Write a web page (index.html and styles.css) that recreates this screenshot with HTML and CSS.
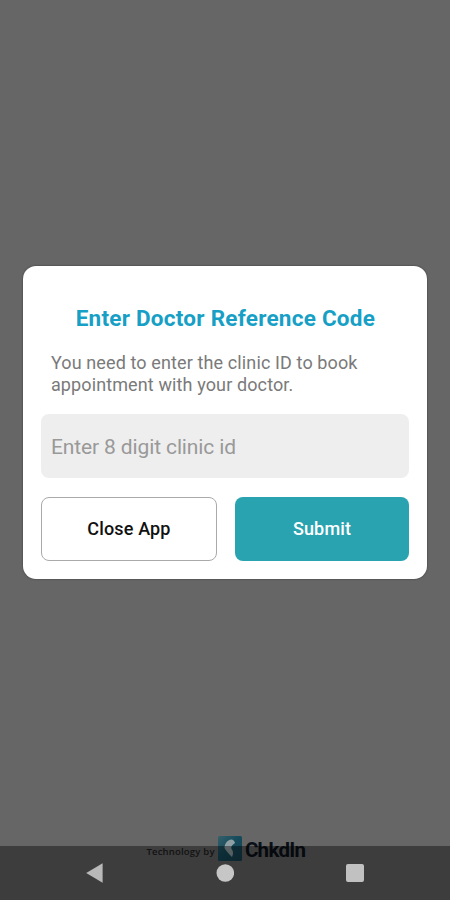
FILE: index.html
```html
<!DOCTYPE html>
<html lang="en">
<head>
<meta charset="utf-8">
<title>Enter Doctor Reference Code</title>
<link rel="stylesheet" href="styles.css">
</head>
<body>
<div class="screen">
  <main class="dialog">
    <h1 class="title">Enter Doctor Reference Code</h1>
    <p class="message">You need to enter the clinic ID to book<br>appointment with your doctor.</p>
    <div class="field"><span>Enter 8 digit clinic id</span></div>
    <div class="actions">
      <button class="btn close">Close App</button>
      <button class="btn submit">Submit</button>
    </div>
  </main>
  <footer class="brand">
    <span class="tagline">Technology by</span>
    <svg class="logo" width="24" height="25" viewBox="0 0 24 25">
      <defs><linearGradient id="tile" x1="0" y1="0" x2="1" y2="1"><stop offset="0" stop-color="#36606b"/><stop offset=".45" stop-color="#154b5c"/><stop offset="1" stop-color="#16404f"/></linearGradient></defs>
      <rect width="24" height="25" rx="1.5" fill="url(#tile)"/>
      <path d="M13.500 3.500 C9 4 6.500 8 6.500 12 C8 15 11 18 14 21 C15.500 18 15.500 15 13.500 13 C12.500 11 14 9 17 7 C16.500 5 15 3.500 13.500 3.500Z" fill="#8fa0a4"/>
    </svg>
    <span class="name">ChkdIn</span>
  </footer>
  <nav class="navbar">
    <svg width="18" height="22" viewBox="0 0 18 22"><path d="M.2 11 L16.600 1.200 V20.800Z" fill="#b9b9b9"/></svg>
    <svg width="18" height="22" viewBox="0 0 18 22"><circle cx="9.300" cy="11" r="8.800" fill="#c6c6c6"/></svg>
    <svg width="18" height="22" viewBox="0 0 18 22"><rect y="2" width="18" height="18" rx="2" fill="#c1c1c1"/></svg>
  </nav>
</div>
</body>
</html>
```
FILE: styles.css
```css
* { box-sizing: border-box; }
body { margin: 0; font-family: Roboto, sans-serif; background: #666; }
.screen {
  position: relative;
  height: 900px;
  overflow: hidden;
  display: flex;
  flex-direction: column;
  padding: 266px 22.600px 0 23.400px;
  background: #666;
}
.dialog {
  height: 312.500px;
  flex: none;
  padding: 38px 18px 0;
  background: #fff;
  border-radius: 13px;
  box-shadow: 0 0 2px rgba(0, 0, 0, .5);
}
.title {
  margin: 0;
  height: 28px;
  font-size: 22.500px;
  line-height: 28px;
  font-weight: 700;
  letter-spacing: .25px;
  text-align: center;
  white-space: nowrap;
  color: #179fc6;
}
.message {
  margin: 20px 0 0;
  padding-left: 9.500px;
  height: 43px;
  font-size: 18px;
  line-height: 21.500px;
  letter-spacing: .12px;
  white-space: nowrap;
  color: #7a7a7a;
}
.field {
  margin-top: 19px;
  height: 64px;
  padding: 2px 0 0 9.500px;
  display: flex;
  align-items: center;
  border-radius: 8px;
  background: #eee;
  color: #999;
  font-size: 21px;
  letter-spacing: -.12px;
}
.actions { display: flex; gap: 18px; margin: 18.600px 0 0 -.4px; width: 368px; }
.btn {
  flex: 1;
  height: 64px;
  padding: 0;
  border: 0;
  border-radius: 8px;
  font: 500 18px Roboto, sans-serif;
  letter-spacing: .15px;
}
.close { background: #fff; border: 1px solid #aaa; color: #111; }
.submit { background: #2aa3b0; color: #fff; }
.brand {
  height: 26px;
  margin: 257px 0 0 123px;
  display: flex;
  align-items: center;
  white-space: nowrap;
}
.tagline { width: 71.500px; font: 600 9.500px "Open Sans", sans-serif; letter-spacing: .2px; color: #202020; padding-top: 6px; }
.logo { flex: none; }
.name { margin-left: 3px; padding-top: 2px; font-size: 20.500px; font-weight: 700; letter-spacing: -.7px; color: #0a1018; }
.navbar {
  position: absolute;
  inset: 846px 0 0;
  display: flex;
  justify-content: space-between;
  align-items: center;
  padding: 0 86px;
  background: rgba(0, 0, 0, .4);
}
```
